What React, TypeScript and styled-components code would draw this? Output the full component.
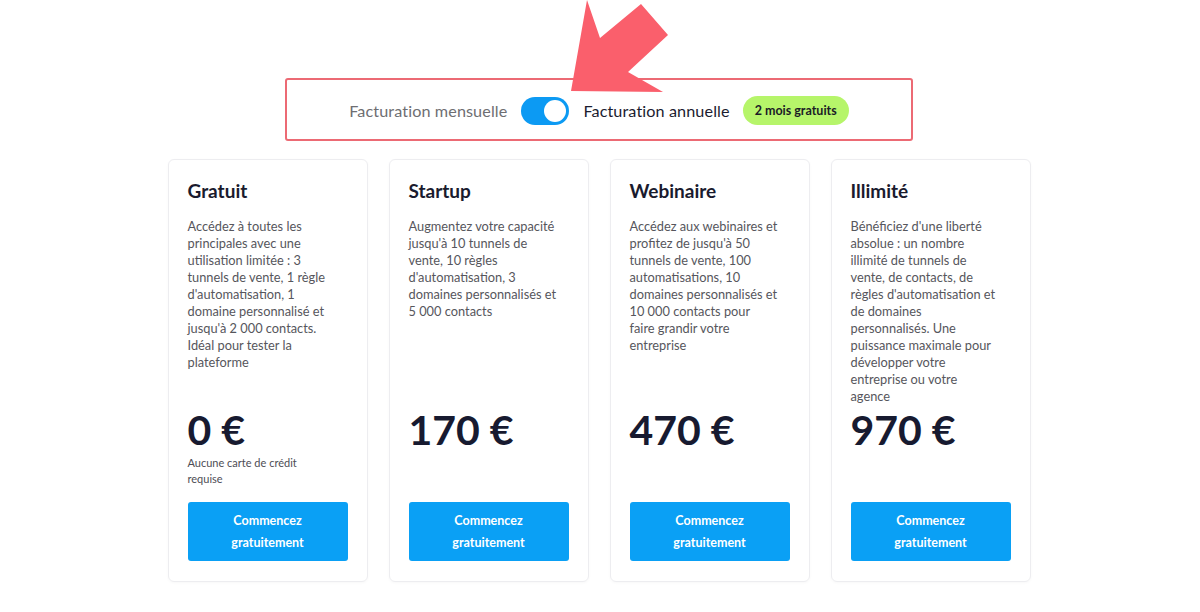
import React from "react";
import styled, { createGlobalStyle } from "styled-components";

const Global = createGlobalStyle`
  html, body { margin: 0; padding: 0; background: #ffffff; }
  body { font-family: Lato, "Noto Sans", "Liberation Sans", sans-serif; }
  * { box-sizing: border-box; }
`;

const Page = styled.div`
  position: relative;
  width: 1200px;
  height: 612px;
  display: flex;
  flex-direction: column;
  align-items: center;
  padding-top: 78px;
  padding-right: 2px;
  overflow: hidden;
`;

const Arrow = styled.svg`
  position: absolute;
  left: 568px;
  top: 0;
  width: 104px;
  height: 96px;
  z-index: 2;
`;

const BillingBox = styled.div`
  width: 628px;
  height: 63px;
  border: 2px solid #ec6a74;
  border-radius: 3px;
  display: flex;
  align-items: center;
  justify-content: center;
  gap: 14px;
  padding-top: 2px;
`;

const BillingLabel = styled.span<{ $active?: boolean }>`
  font-size: 16.2px;
  color: ${(p) => (p.$active ? "#1b1c30" : "#6e6e72")};
  font-weight: 400;
  letter-spacing: 0.1px;
`;

const Switch = styled.div`
  position: relative;
  width: 48px;
  height: 28px;
  border-radius: 14px;
  background: #0c9af3;
`;

const Knob = styled.div`
  position: absolute;
  right: 3px;
  top: 3px;
  width: 22px;
  height: 22px;
  border-radius: 50%;
  background: #ffffff;
  box-shadow: 0 0 0 1px rgba(12, 154, 243, 0.4);
`;

const Badge = styled.span`
  margin-left: -1px;
  height: 29px;
  padding: 0 12px;
  border-radius: 15px;
  background: #b6f56a;
  color: #1b1c26;
  font-size: 12.5px;
  font-weight: 700;
  display: inline-flex;
  align-items: center;
`;

const Cards = styled.div`
  margin-top: 18px;
  display: grid;
  grid-template-columns: repeat(4, 200px);
  gap: 21px;
`;

const Card = styled.div`
  border: 1px solid #ededf0;
  border-radius: 6px;
  box-shadow: 0 1px 3px rgba(0, 0, 0, 0.03);
  padding: 19px 19px 20px;
  display: flex;
  flex-direction: column;
`;

const Title = styled.h3`
  margin: 0;
  font-size: 19px;
  line-height: 24px;
  font-weight: 700;
  color: #1a1b2e;
`;

const Desc = styled.p`
  margin: 15px 0 0;
  height: 188px;
  font-size: 12.8px;
  line-height: 17px;
  color: #56565c;
  white-space: nowrap;
`;

const Price = styled.div`
  font-size: 41px;
  line-height: 48px;
  font-weight: 700;
  color: #171a30;
`;

const Note = styled.div`
  min-height: 32px;
  margin-top: 1px;
  font-size: 11px;
  line-height: 16px;
  color: #4d4d55;
`;

const Button = styled.button`
  margin-top: 15px;
  width: 160px;
  height: 59px;
  border: none;
  border-radius: 3px;
  background: #0aa0f5;
  color: #ffffff;
  font-family: inherit;
  font-size: 12.5px;
  font-weight: 700;
  line-height: 22px;
  cursor: pointer;
`;

type Plan = { title: string; lines: string[]; price: string; note?: string[] };

const plans: Plan[] = [
  {
    title: "Gratuit",
    lines: [
      "Accédez à toutes les",
      "principales avec une",
      "utilisation limitée : 3",
      "tunnels de vente, 1 règle",
      "d'automatisation, 1",
      "domaine personnalisé et",
      "jusqu'à 2 000 contacts.",
      "Idéal pour tester la",
      "plateforme",
    ],
    price: "0 €",
    note: ["Aucune carte de crédit", "requise"],
  },
  {
    title: "Startup",
    lines: [
      "Augmentez votre capacité",
      "jusqu'à 10 tunnels de",
      "vente, 10 règles",
      "d'automatisation, 3",
      "domaines personnalisés et",
      "5 000 contacts",
    ],
    price: "170 €",
  },
  {
    title: "Webinaire",
    lines: [
      "Accédez aux webinaires et",
      "profitez de jusqu'à 50",
      "tunnels de vente, 100",
      "automatisations, 10",
      "domaines personnalisés et",
      "10 000 contacts pour",
      "faire grandir votre",
      "entreprise",
    ],
    price: "470 €",
  },
  {
    title: "Illimité",
    lines: [
      "Bénéficiez d'une liberté",
      "absolue : un nombre",
      "illimité de tunnels de",
      "vente, de contacts, de",
      "règles d'automatisation et",
      "de domaines",
      "personnalisés. Une",
      "puissance maximale pour",
      "développer votre",
      "entreprise ou votre",
      "agence",
    ],
    price: "970 €",
  },
];

function Lines({ lines }: { lines: string[] }) {
  return (
    <>
      {lines.map((l, i) => (
        <React.Fragment key={i}>
          {l}
          {i < lines.length - 1 && <br />}
        </React.Fragment>
      ))}
    </>
  );
}

export default function App() {
  return (
    <>
      <Global />
      <Page>
        <Arrow viewBox="568 0 104 96">
          <polygon
            points="587,0 600,38 641,4 668,35 628,72 663,92 571,91"
            fill="#fa5f6c"
          />
        </Arrow>
        <BillingBox>
          <BillingLabel>Facturation mensuelle</BillingLabel>
          <Switch>
            <Knob />
          </Switch>
          <BillingLabel $active>Facturation annuelle</BillingLabel>
          <Badge>2 mois gratuits</Badge>
        </BillingBox>
        <Cards>
          {plans.map((p) => (
            <Card key={p.title}>
              <Title>{p.title}</Title>
              <Desc>
                <Lines lines={p.lines} />
              </Desc>
              <Price>{p.price}</Price>
              <Note>{p.note && <Lines lines={p.note} />}</Note>
              <Button>
                Commencez
                <br />
                gratuitement
              </Button>
            </Card>
          ))}
        </Cards>
      </Page>
    </>
  );
}
